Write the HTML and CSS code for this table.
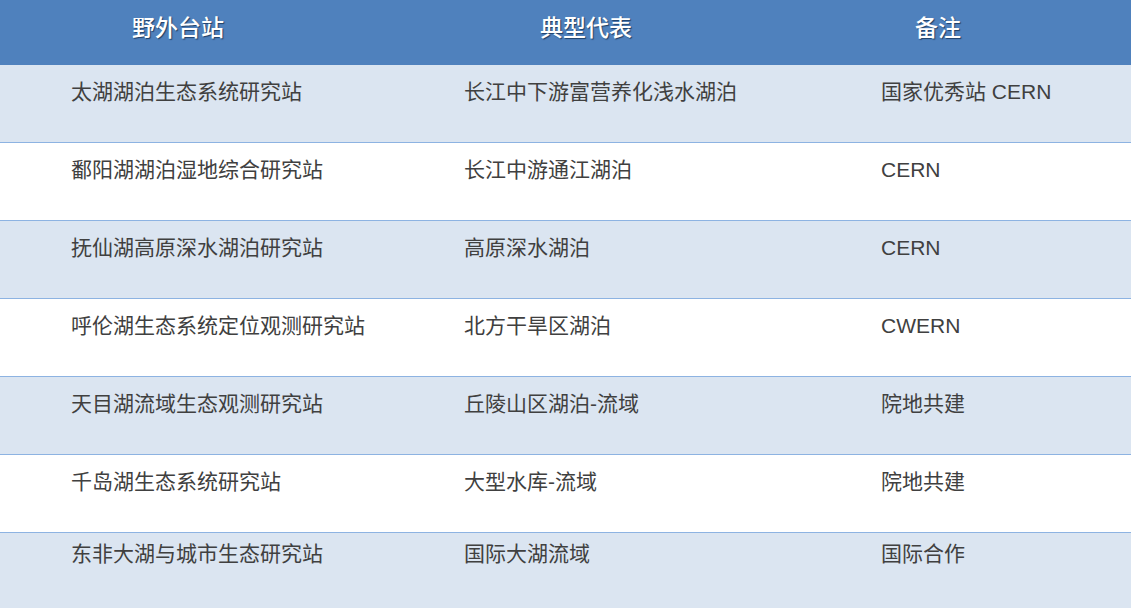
FILE: index.html
```html
<!DOCTYPE html>
<html lang="zh">
<head>
<meta charset="utf-8">
<title>野外台站</title>
<link rel="stylesheet" href="styles.css">
</head>
<body>
<div class="table">
  <div class="head">
    <div class="hcell">野外台站</div>
    <div class="hcell">典型代表</div>
    <div class="hcell">备注</div>
    <div></div>
  </div>
  <div class="row alt">
    <div class="c1">太湖湖泊生态系统研究站</div>
    <div class="c2">长江中下游富营养化浅水湖泊</div>
    <div class="c3">国家优秀站 CERN</div>
  </div>
  <div class="row">
    <div class="c1">鄱阳湖湖泊湿地综合研究站</div>
    <div class="c2">长江中游通江湖泊</div>
    <div class="c3">CERN</div>
  </div>
  <div class="row alt">
    <div class="c1">抚仙湖高原深水湖泊研究站</div>
    <div class="c2">高原深水湖泊</div>
    <div class="c3">CERN</div>
  </div>
  <div class="row">
    <div class="c1">呼伦湖生态系统定位观测研究站</div>
    <div class="c2">北方干旱区湖泊</div>
    <div class="c3">CWERN</div>
  </div>
  <div class="row alt">
    <div class="c1">天目湖流域生态观测研究站</div>
    <div class="c2">丘陵山区湖泊-流域</div>
    <div class="c3">院地共建</div>
  </div>
  <div class="row">
    <div class="c1">千岛湖生态系统研究站</div>
    <div class="c2">大型水库-流域</div>
    <div class="c3">院地共建</div>
  </div>
  <div class="row alt last">
    <div class="c1">东非大湖与城市生态研究站</div>
    <div class="c2">国际大湖流域</div>
    <div class="c3">国际合作</div>
  </div>
</div>
</body>
</html>
```
FILE: styles.css
```css
* { box-sizing: border-box; }
html, body {
  margin: 0;
  padding: 0;
  background: #ffffff;
  overflow: hidden;
}
body {
  font-family: "Liberation Sans", "Noto Sans CJK SC", sans-serif;
  color: #404040;
}
.table {
  width: 1131px;
}
.head {
  display: grid;
  grid-template-columns: 356px 460px 244px 1fr;
  height: 65px;
  background: #4f81bd;
  align-items: start;
}
.hcell {
  text-align: center;
  color: #ffffff;
  font-size: 23px;
  font-weight: 500;
  line-height: 24px;
  padding-top: 16px;
  white-space: nowrap;
  text-shadow: 1px 1px 1px #1f3f66;
}
.row {
  display: grid;
  grid-template-columns: 356px 460px 1fr;
  height: 78px;
  border-bottom: 1px solid #8db3e2;
  background: #ffffff;
  font-size: 21px;
  line-height: 24px;
  padding-top: 15px;
  white-space: nowrap;
}
.row.alt {
  background: #dbe5f1;
}
.row.last {
  border-bottom: none;
  padding-top: 9px;
  height: 80px;
}
.c1 { padding-left: 71px; }
.c2 { padding-left: 108px; }
.c3 { padding-left: 65px; }
```
